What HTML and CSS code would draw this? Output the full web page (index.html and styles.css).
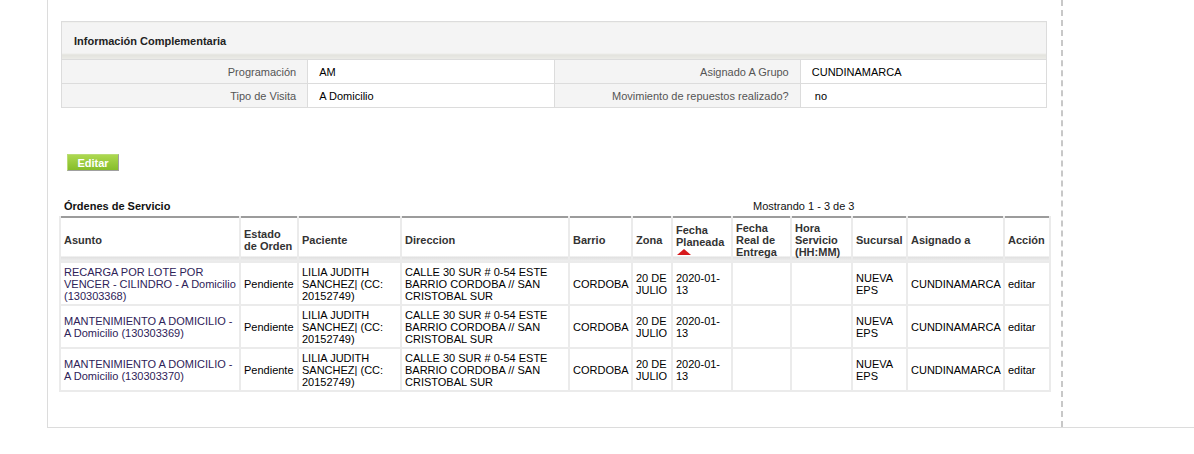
FILE: index.html
```html
<!DOCTYPE html>
<html lang="es">

<head>
    <meta charset="UTF-8">
    <meta name="viewport" content="width=device-width, initial-scale=1.0">
    <title>Orden de Servicio</title>
    <link rel="stylesheet" href="styles.css">
</head>

<body>
    <div class="page">
        <div class="panel">
            <div class="panel-main">
                <table class="info-table">
                    <tr>
                        <th class="info-head" colspan="4">Información Complementaria</th>
                    </tr>
                    <tr>
                        <td class="info-label">Programación</td>
                        <td class="info-value">AM</td>
                        <td class="info-label">Asignado A Grupo</td>
                        <td class="info-value">CUNDINAMARCA</td>
                    </tr>
                    <tr>
                        <td class="info-label">Tipo de Visita</td>
                        <td class="info-value">A Domicilio</td>
                        <td class="info-label">Movimiento de repuestos realizado?</td>
                        <td class="info-value">&nbsp;no</td>
                    </tr>
                </table>

                <div class="actions">
                    <button class="btn-green">Editar</button>
                </div>

                <div class="orders-caption">
                    <div class="orders-title">Órdenes de Servicio</div>
                    <div class="orders-count">Mostrando 1 - 3 de 3</div>
                </div>

                <table class="orders-table">
                    <colgroup>
                        <col style="width:180px">
                        <col style="width:58px">
                        <col style="width:103px">
                        <col style="width:168px">
                        <col style="width:63px">
                        <col style="width:40px">
                        <col style="width:60px">
                        <col style="width:59px">
                        <col style="width:61px">
                        <col style="width:55px">
                        <col style="width:97px">
                        <col style="width:46px">
                    </colgroup>
                    <thead>
                        <tr>
                            <th>Asunto</th>
                            <th>Estado de Orden</th>
                            <th>Paciente</th>
                            <th>Direccion</th>
                            <th>Barrio</th>
                            <th>Zona</th>
                            <th>Fecha Planeada<span class="sort-arrow"></span></th>
                            <th>Fecha Real de Entrega</th>
                            <th>Hora Servicio (HH:MM)</th>
                            <th>Sucursal</th>
                            <th>Asignado a</th>
                            <th>Acción</th>
                        </tr>
                    </thead>
                    <tbody>
                        <tr>
                            <td class="subject">RECARGA POR LOTE POR VENCER - CILINDRO - A Domicilio (130303368)</td>
                            <td>Pendiente</td>
                            <td>LILIA JUDITH SANCHEZ| (CC: 20152749)</td>
                            <td>CALLE 30 SUR # 0-54 ESTE BARRIO CORDOBA // SAN CRISTOBAL SUR</td>
                            <td>CORDOBA</td>
                            <td>20 DE JULIO</td>
                            <td>2020-01-13</td>
                            <td></td>
                            <td></td>
                            <td>NUEVA EPS</td>
                            <td>CUNDINAMARCA</td>
                            <td>editar</td>
                        </tr>
                        <tr>
                            <td class="subject">MANTENIMIENTO A DOMICILIO - A Domicilio (130303369)</td>
                            <td>Pendiente</td>
                            <td>LILIA JUDITH SANCHEZ| (CC: 20152749)</td>
                            <td>CALLE 30 SUR # 0-54 ESTE BARRIO CORDOBA // SAN CRISTOBAL SUR</td>
                            <td>CORDOBA</td>
                            <td>20 DE JULIO</td>
                            <td>2020-01-13</td>
                            <td></td>
                            <td></td>
                            <td>NUEVA EPS</td>
                            <td>CUNDINAMARCA</td>
                            <td>editar</td>
                        </tr>
                        <tr>
                            <td class="subject">MANTENIMIENTO A DOMICILIO - A Domicilio (130303370)</td>
                            <td>Pendiente</td>
                            <td>LILIA JUDITH SANCHEZ| (CC: 20152749)</td>
                            <td>CALLE 30 SUR # 0-54 ESTE BARRIO CORDOBA // SAN CRISTOBAL SUR</td>
                            <td>CORDOBA</td>
                            <td>20 DE JULIO</td>
                            <td>2020-01-13</td>
                            <td></td>
                            <td></td>
                            <td>NUEVA EPS</td>
                            <td>CUNDINAMARCA</td>
                            <td>editar</td>
                        </tr>
                    </tbody>
                </table>
            </div>
            <div class="panel-side"></div>
        </div>
    </div>
</body>

</html>
```

FILE: styles.css
```css
body {
    margin: 0;
    font-family: "Liberation Sans", Arial, sans-serif;
    font-size: 11px;
    color: #000;
    background: #fff;
}

.page {
    padding-left: 47px;
}

.panel {
    display: flex;
    height: 428px;
    border-left: 1px solid #dcdcdc;
    border-bottom: 1px solid #dcdcdc;
    box-sizing: border-box;
}

.panel-main {
    width: 1015px;
    padding: 21px 14px 0 11px;
    box-sizing: border-box;
    border-right: 2px dashed #c8c8c8;
}

.panel-side {
    flex: 1;
}

/* informacion complementaria */
.info-table {
    width: 986px;
    margin-left: 2px;
    border-collapse: collapse;
    border: 1px solid #dcdcdc;
}

.info-head {
    height: 37px;
    padding: 0 12px;
    text-align: left;
    font-weight: bold;
    color: #222;
    background: linear-gradient(to bottom, #f4f4f4 0, #f4f4f4 31px, #e2e2dc 32px, #ecece8 37px);
}

.info-label,
.info-value {
    height: 23px;
    padding: 0 11px;
    border: 1px solid #dcdcdc;
    width: 25%;
}

.info-label {
    text-align: right;
    color: #555;
    background: #f4f4f4;
}

.info-value {
    background: #fff;
}

.actions {
    padding: 46px 0 0 8px;
    height: 37px;
}

.btn-green {
    display: block;
    width: 52px;
    height: 17px;
    padding: 0;
    border: 1px solid #b9dc74;
    border-right-color: #a0a0a0;
    border-bottom-color: #a0a0a0;
    background: linear-gradient(to bottom, #acd84f, #86bd2a);
    color: #fff;
    font-family: "Liberation Sans", Arial, sans-serif;
    font-size: 11px;
    font-weight: bold;
    cursor: pointer;
}

/* ordenes de servicio */
.orders-caption {
    display: flex;
    height: 12px;
    padding-bottom: 4px;
    margin-top: 9px;
}

.orders-title {
    width: 497px;
    padding-left: 5px;
    font-weight: bold;
    color: #111;
}

.orders-count {
    width: 495px;
    padding-left: 8px;
    text-align: center;
    color: #111;
}

.orders-table {
    width: 990px;
    table-layout: fixed;
    border-collapse: collapse;
    border-top: 2px solid #9c9c9c;
}

.orders-table th,
.orders-table td {
    border: 2px solid #ebebeb;
    padding: 0 1px 0 3px;
    text-align: left;
    line-height: 12px;
    vertical-align: middle;
    overflow: hidden;
}

.orders-table th {
    height: 43px;
    border-top: none;
    font-weight: bold;
    color: #333;
    background: linear-gradient(to bottom, #fff 0, #fff 38px, #e0e0e0 39px, #f2f2f2 44px);
}

.orders-table td {
    height: 41px;
}

.orders-table td.subject {
    color: #2e2258;
}

.sort-arrow {
    display: block;
    width: 0;
    height: 0;
    margin: 1px 0 0 1px;
    border-left: 7px solid transparent;
    border-right: 7px solid transparent;
    border-bottom: 6px solid #d7191c;
}
```
